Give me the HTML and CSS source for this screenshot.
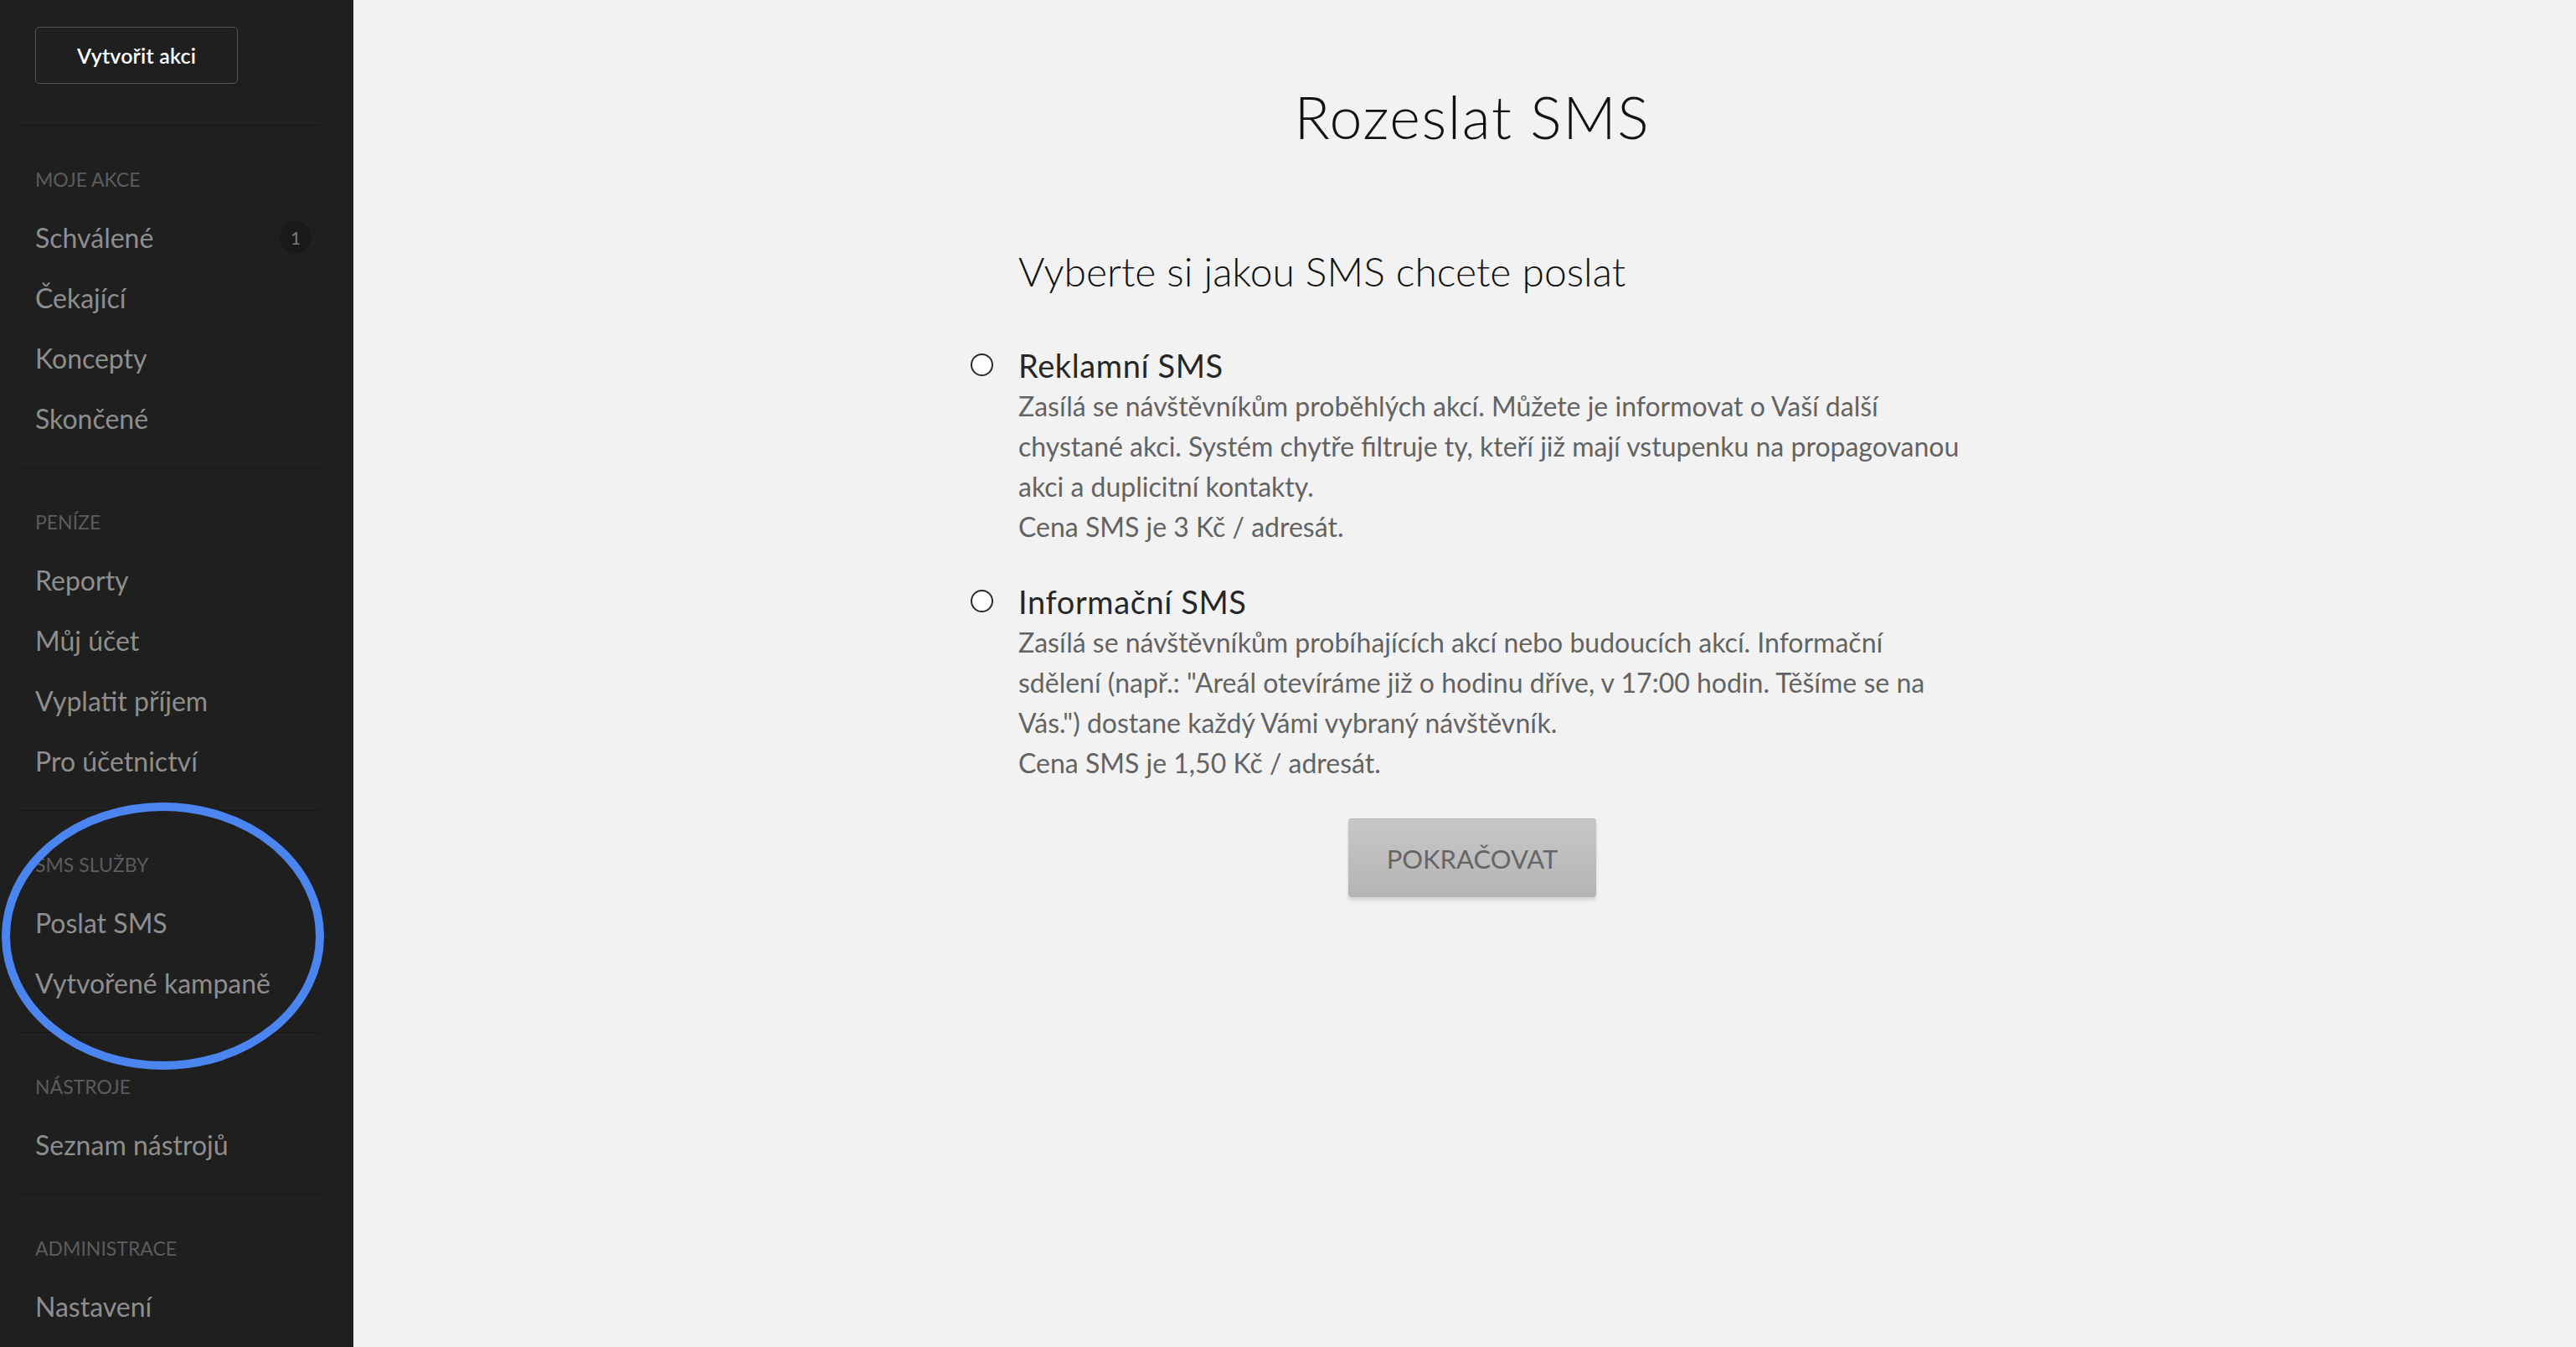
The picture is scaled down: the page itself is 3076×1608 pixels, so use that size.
FILE: index.html
```html
<!DOCTYPE html>
<html lang="cs">
<head>
<meta charset="utf-8">
<title>Rozeslat SMS</title>
<link rel="stylesheet" href="styles.css">
</head>
<body>
<div class="app">
  <aside class="sidebar">
    <div class="sidebar-top">
      <a class="create-btn" href="#">Vytvořit akci</a>
    </div>
    <nav class="nav-section">
      <div class="nav-label">MOJE AKCE</div>
      <ul class="nav-list">
        <li class="nav-item"><span>Schválené</span><span class="badge">1</span></li>
        <li class="nav-item"><span>Čekající</span></li>
        <li class="nav-item"><span>Koncepty</span></li>
        <li class="nav-item"><span>Skončené</span></li>
      </ul>
    </nav>
    <nav class="nav-section">
      <div class="nav-label">PENÍZE</div>
      <ul class="nav-list">
        <li class="nav-item"><span>Reporty</span></li>
        <li class="nav-item"><span>Můj účet</span></li>
        <li class="nav-item"><span>Vyplatit příjem</span></li>
        <li class="nav-item"><span>Pro účetnictví</span></li>
      </ul>
    </nav>
    <nav class="nav-section">
      <div class="nav-label">SMS SLUŽBY</div>
      <ul class="nav-list">
        <li class="nav-item"><span>Poslat SMS</span></li>
        <li class="nav-item"><span>Vytvořené kampaně</span></li>
      </ul>
    </nav>
    <nav class="nav-section">
      <div class="nav-label">NÁSTROJE</div>
      <ul class="nav-list">
        <li class="nav-item"><span>Seznam nástrojů</span></li>
      </ul>
    </nav>
    <nav class="nav-section nav-section-last">
      <div class="nav-label">ADMINISTRACE</div>
      <ul class="nav-list">
        <li class="nav-item"><span>Nastavení</span></li>
      </ul>
    </nav>
    <svg class="highlight" width="392" height="330" viewBox="0 0 392 330" aria-hidden="true">
      <ellipse cx="194.5" cy="162.5" rx="187.5" ry="154.5" fill="none" stroke="#4b85f0" stroke-width="10"/>
    </svg>
  </aside>

  <main class="main">
    <h1 class="page-title">Rozeslat SMS</h1>
    <div class="form">
      <h2 class="form-heading">Vyberte si jakou SMS chcete poslat</h2>

      <label class="option">
        <span class="radio"></span>
        <span class="option-body">
          <span class="option-title">Reklamní SMS</span>
          <span class="option-text">Zasílá se návštěvníkům proběhlých akcí. Můžete je informovat o Vaší další<br>chystané akci. Systém chytře filtruje ty, kteří již mají vstupenku na propagovanou<br>akci a duplicitní kontakty.<br>Cena SMS je 3 Kč / adresát.</span>
        </span>
      </label>

      <label class="option">
        <span class="radio"></span>
        <span class="option-body">
          <span class="option-title">Informační SMS</span>
          <span class="option-text">Zasílá se návštěvníkům probíhajících akcí nebo budoucích akcí. Informační<br>sdělení (např.: "Areál otevíráme již o hodinu dříve, v 17:00 hodin. Těšíme se na<br>Vás.") dostane každý Vámi vybraný návštěvník.<br>Cena SMS je 1,50 Kč / adresát.</span>
        </span>
      </label>

      <div class="actions">
        <button class="continue-btn" type="button">POKRAČOVAT</button>
      </div>
    </div>
  </main>
</div>
</body>
</html>
```

FILE: styles.css
```css
* { box-sizing: border-box; }

html, body {
  margin: 0;
  padding: 0;
  height: 100%;
}

body {
  font-family: Lato, "Open Sans", Arial, sans-serif;
  background: #f2f2f2;
}

.app {
  display: flex;
  height: 1608px;
  overflow: hidden;
}

/* ---------- Sidebar ---------- */
.sidebar {
  position: relative;
  width: 422px;
  flex-shrink: 0;
  background: #1f1f1f;
  display: flex;
  flex-direction: column;
}

.sidebar-top {
  margin: 0 40px 0 22px;
  padding: 32px 0 49px 20px;
  border-bottom: 1px solid #161616;
}

.create-btn {
  display: flex;
  align-items: center;
  justify-content: center;
  width: 242px;
  height: 68px;
  border: 1.5px solid #555555;
  border-radius: 5px;
  color: #ffffff;
  font-size: 25px;
  font-weight: 600;
  letter-spacing: 0.2px;
  text-decoration: none;
}

.nav-section {
  margin: 0 40px 0 22px;
  padding: 46px 10px 23px 20px;
  border-bottom: 1px solid #171717;
}

.nav-section-last {
  border-bottom: none;
}

.nav-label {
  height: 36px;
  line-height: 36px;
  font-size: 23px;
  color: #5c5c5c;
}

.nav-list {
  list-style: none;
  margin: 15px 0 0;
  padding: 0;
}

.nav-item {
  display: flex;
  align-items: center;
  justify-content: space-between;
  height: 72px;
  font-size: 32px;
  color: #8e8e8e;
}

.badge {
  width: 38px;
  height: 38px;
  border-radius: 50%;
  background: #191919;
  color: #7a7a7a;
  font-size: 21px;
  display: flex;
  align-items: center;
  justify-content: center;
}

.highlight {
  position: absolute;
  left: 0;
  top: 955px;
}

/* ---------- Main ---------- */
.main {
  flex: 1;
  background: #f2f2f2;
  padding: 98px 0 0 18px;
}

.page-title {
  margin: 0;
  text-align: center;
  font-size: 70px;
  line-height: 82px;
  font-weight: 300;
  letter-spacing: 1.6px;
  color: #111111;
}

.form {
  width: 1198px;
  margin: 115px auto 0;
}

.form-heading {
  margin: 0 0 58px 57px;
  font-size: 48px;
  line-height: 58px;
  font-weight: 300;
  color: #111111;
}

.option {
  display: flex;
  align-items: flex-start;
  gap: 30px;
  margin-bottom: 40px;
  cursor: pointer;
}

.radio {
  flex-shrink: 0;
  width: 27px;
  height: 27px;
  margin-top: 11px;
  border: 2px solid #2a2a2a;
  border-radius: 50%;
  background: #ffffff;
}

.option-body {
  display: flex;
  flex-direction: column;
}

.option-title {
  font-size: 38px;
  line-height: 50px;
  letter-spacing: 0.6px;
  color: #262626;
}

.option-text {
  font-size: 32px;
  line-height: 48px;
  color: #636363;
  white-space: nowrap;
}

.actions {
  display: flex;
  justify-content: center;
  padding-top: 2px;
}

.continue-btn {
  width: 296px;
  height: 94px;
  border: none;
  border-top: 1px solid #b3b3b3;
  border-radius: 4px;
  background: linear-gradient(#c7c7c7, #b4b4b4);
  box-shadow: 0 4px 4px rgba(0, 0, 0, 0.12);
  color: #666666;
  font-family: Lato, "Open Sans", Arial, sans-serif;
  font-size: 31px;
  cursor: pointer;
}
```
